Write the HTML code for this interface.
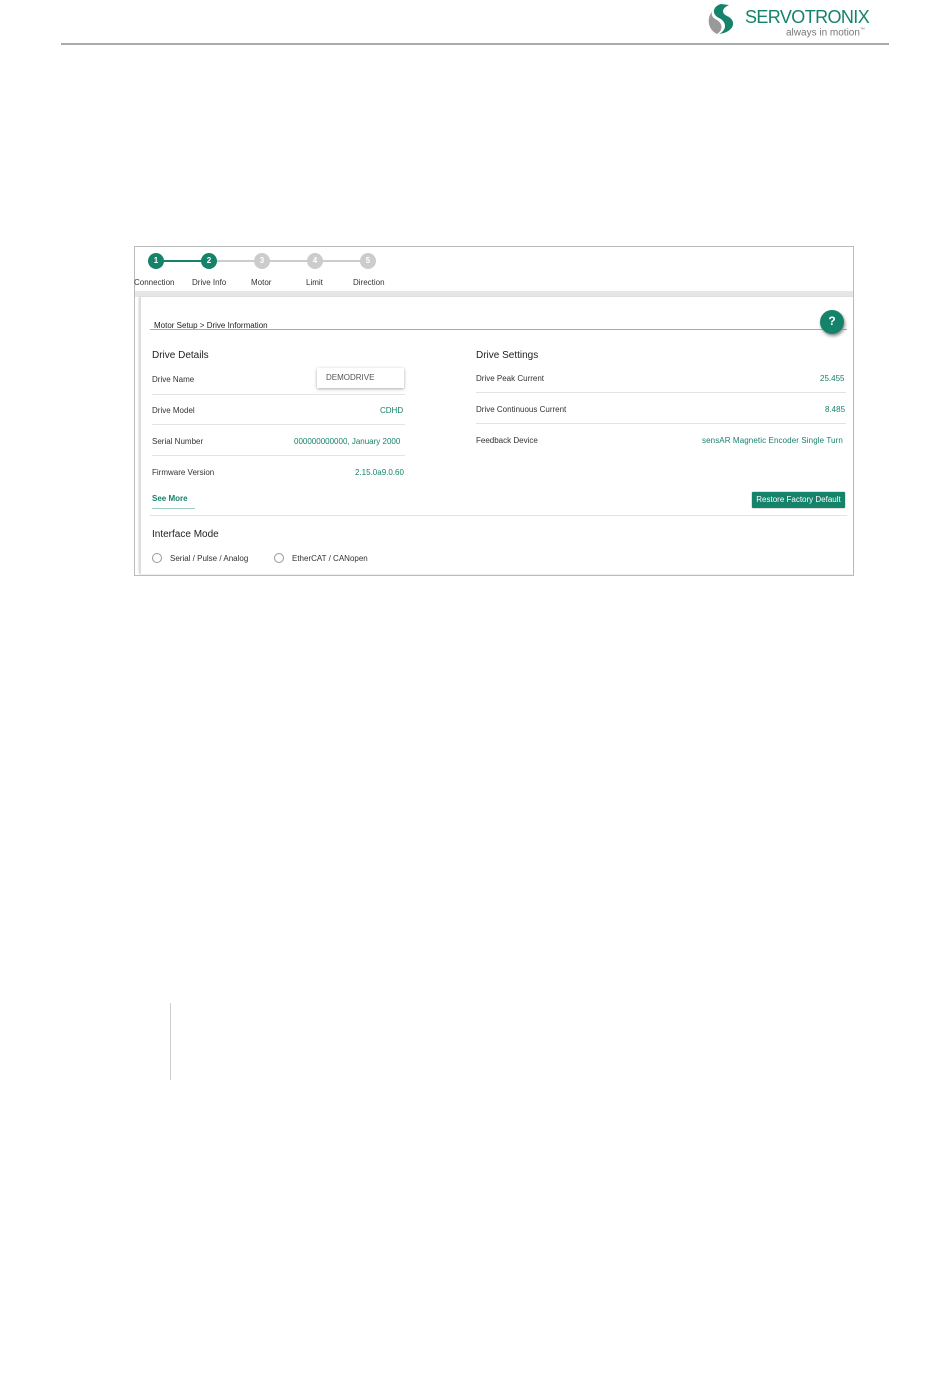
<!DOCTYPE html>
<html><head><meta charset="utf-8"><style>
body{margin:0;width:950px;height:1397px;background:#fff;font-family:"Liberation Sans",sans-serif;position:relative;overflow:hidden}
.a{position:absolute;white-space:nowrap}
.t{font-size:8px;color:#333}
.g{color:#15826a}
.c{position:absolute;width:16px;height:16px;border-radius:50%;color:#fff;font-size:8px;font-weight:bold;text-align:center;line-height:16px}
.hr{position:absolute;height:1px;background:#e3e3e3}
.r{position:absolute;width:8px;height:8px;border:1px solid #999;border-radius:50%}
</style></head><body>
<div class="a" style="left:61px;top:43px;width:828px;height:2px;background:#aaa"></div>
<svg class="a" style="left:705px;top:2px" width="40" height="34" viewBox="0 0 40 34"><path d="M16 2 C8 4 6 12 14 16 C22 20 22 28 14 32 C30 30 32 18 22 14 C16 11 17 6 24 3 Z" fill="#15826a"/><path d="M12 6 C2 10 0 26 12 32 C18 28 18 22 12 18 C4 14 6 8 12 6Z" fill="#999"/></svg>
<div class="a" style="left:745px;top:7px;font-size:18px;color:#15826a;letter-spacing:-0.6px">SERVOTRONIX</div>
<div class="a" style="left:786px;top:27px;font-size:10px;color:#777">always in motion<sup style="font-size:5px">™</sup></div>

<div class="a" style="left:134px;top:246px;width:718px;height:328px;border:1px solid #bbb;background:#fff"></div>
<div class="a" style="left:135px;top:291px;width:718px;height:6px;background:#e6e6e6"></div>
<div class="a" style="left:140px;top:297px;width:713px;height:277px;border-left:1px solid #ddd;box-shadow:-1px 0 2px #ccc"></div>
<div class="a" style="left:164px;top:260px;width:40px;height:2px;background:#15826a"></div>
<div class="a" style="left:216px;top:260px;width:145px;height:2px;background:#ccc"></div>
<div class="c" style="left:148px;top:253px;background:#15826a">1</div>
<div class="c" style="left:201px;top:253px;background:#15826a">2</div>
<div class="c" style="left:254px;top:253px;background:#ccc">3</div>
<div class="c" style="left:307px;top:253px;background:#ccc">4</div>
<div class="c" style="left:360px;top:253px;background:#ccc">5</div>
<div class="a t" style="left:134px;top:278px">Connection</div>
<div class="a t" style="left:192px;top:278px">Drive Info</div>
<div class="a t" style="left:251px;top:278px">Motor</div>
<div class="a t" style="left:306px;top:278px">Limit</div>
<div class="a t" style="left:353px;top:278px">Direction</div>

<div class="a t" style="left:154px;top:321px;color:#222">Motor Setup &gt; Drive Information</div>
<div class="a" style="left:150px;top:329px;width:697px;height:1px;background:#7fbfae"></div>
<div class="c" style="left:820px;top:310px;width:24px;height:24px;line-height:22px;font-size:12px;background:#15826a;box-shadow:1px 2px 3px #888">?</div>

<div class="a" style="left:152px;top:350px;font-size:10px;color:#222">Drive Details</div>
<div class="a" style="left:476px;top:350px;font-size:10px;color:#222">Drive Settings</div>
<div class="a t" style="left:152px;top:375px">Drive Name</div>
<div class="a t" style="left:317px;top:368px;width:78px;height:20px;line-height:20px;padding-left:9px;box-shadow:0 1px 3px #aaa;color:#555">DEMODRIVE</div>
<div class="hr" style="left:152px;top:394px;width:253px"></div>
<div class="a t" style="left:152px;top:406px">Drive Model</div>
<div class="a t g" style="left:380px;top:406px">CDHD</div>
<div class="hr" style="left:152px;top:424px;width:253px"></div>
<div class="a t" style="left:152px;top:437px">Serial Number</div>
<div class="a t g" style="left:294px;top:437px">000000000000, January 2000</div>
<div class="hr" style="left:152px;top:455px;width:253px"></div>
<div class="a t" style="left:152px;top:468px">Firmware Version</div>
<div class="a t g" style="left:355px;top:468px">2.15.0a9.0.60</div>
<div class="a t g" style="left:152px;top:494px;font-weight:bold">See More</div>
<div class="a" style="left:152px;top:508px;width:43px;height:1px;background:#9fd0c2"></div>

<div class="a t" style="left:476px;top:374px">Drive Peak Current</div>
<div class="a t g" style="left:820px;top:374px">25.455</div>
<div class="hr" style="left:476px;top:392px;width:370px"></div>
<div class="a t" style="left:476px;top:405px">Drive Continuous Current</div>
<div class="a t g" style="left:825px;top:405px">8.485</div>
<div class="hr" style="left:476px;top:423px;width:370px"></div>
<div class="a t" style="left:476px;top:436px">Feedback Device</div>
<div class="a t g" style="left:702px;top:436px;letter-spacing:0.1px">sensAR Magnetic Encoder Single Turn</div>
<div class="a" style="left:752px;top:492px;width:93px;height:16px;background:#15826a;color:#fff;font-size:8px;line-height:16px;text-align:center;border-radius:1px;box-shadow:0 0 1px #444">Restore Factory Default</div>
<div class="hr" style="left:150px;top:515px;width:697px"></div>
<div class="a" style="left:152px;top:529px;font-size:10px;color:#222">Interface Mode</div>
<div class="r" style="left:152px;top:553px"></div>
<div class="a t" style="left:170px;top:554px">Serial / Pulse / Analog</div>
<div class="r" style="left:274px;top:553px"></div>
<div class="a t" style="left:292px;top:554px">EtherCAT / CANopen</div>
<div class="a" style="left:170px;top:1003px;width:1px;height:77px;background:#ccc"></div>
</body></html>
